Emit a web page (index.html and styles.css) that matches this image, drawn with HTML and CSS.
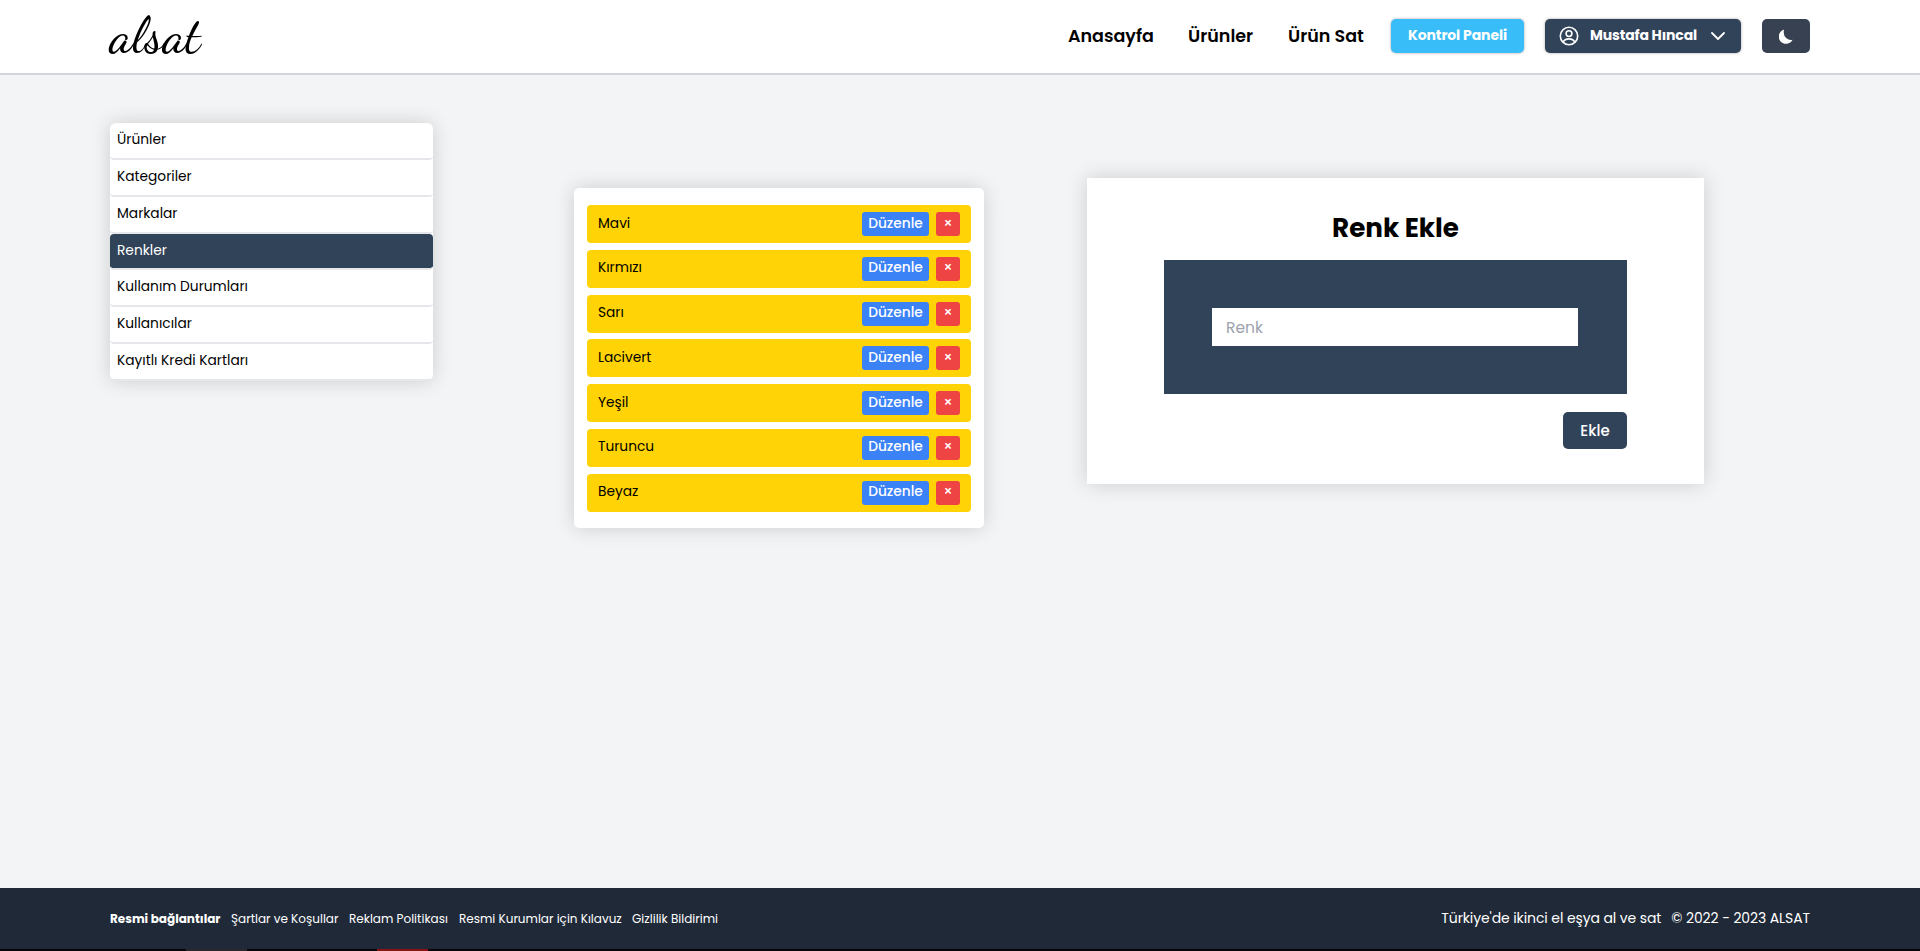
FILE: index.html
```html
<!DOCTYPE html>
<html lang="tr">
<head>
<meta charset="utf-8">
<title>alsat</title>
<link rel="stylesheet" href="styles.css">
</head>
<body>
<header class="header">
  <a class="logo">alsat</a>
  <nav class="nav">
    <a class="link home"><span>Anasayfa</span></a>
    <a class="link products"><span>Ürünler</span></a>
    <a class="link sell"><span>Ürün Sat</span></a>
    <a class="btn panel"><span>Kontrol Paneli</span></a>
    <button class="btn user">
      <svg class="avatar" viewBox="0 0 20 20" fill="none" stroke="#fff" stroke-width="1.6"><circle cx="10" cy="10" r="8.7"/><circle cx="10" cy="7.6" r="2.9"/><path d="M4.2 16.2C5.2 13.7 7.3 12.9 10 12.9s4.800.8 5.8 3.3"/></svg>
      <span>Mustafa Hıncal</span>
      <svg class="chevron" viewBox="0 0 14 9" fill="none" stroke="#fff" stroke-width="1.8" stroke-linecap="round" stroke-linejoin="round"><path d="M1 1l6 6 6-6"/></svg>
    </button>
    <button class="btn theme">
      <svg class="moon" viewBox="0 0 14 15" fill="#fff"><path d="M5.200.5A9 9 0 0 0 4.700 3.600a7.400 7.400 0 0 0 8.900 7.200A7.300 7.300 0 1 1 5.200.5z"/></svg>
    </button>
  </nav>
</header>
<main class="main">
  <ul class="side">
    <li><span>Ürünler</span></li>
    <li><span>Kategoriler</span></li>
    <li><span>Markalar</span></li>
    <li class="active"><span>Renkler</span></li>
    <li><span>Kullanım Durumları</span></li>
    <li><span>Kullanıcılar</span></li>
    <li><span>Kayıtlı Kredi Kartları</span></li>
  </ul>
  <section class="colors">
    <div class="row"><span class="name">Mavi</span><button class="edit">Düzenle</button><button class="del">×</button></div>
    <div class="row"><span class="name">Kırmızı</span><button class="edit">Düzenle</button><button class="del">×</button></div>
    <div class="row"><span class="name">Sarı</span><button class="edit">Düzenle</button><button class="del">×</button></div>
    <div class="row"><span class="name">Lacivert</span><button class="edit">Düzenle</button><button class="del">×</button></div>
    <div class="row"><span class="name">Yeşil</span><button class="edit">Düzenle</button><button class="del">×</button></div>
    <div class="row"><span class="name">Turuncu</span><button class="edit">Düzenle</button><button class="del">×</button></div>
    <div class="row"><span class="name">Beyaz</span><button class="edit">Düzenle</button><button class="del">×</button></div>
  </section>
  <form class="form">
    <h1>Renk Ekle</h1>
    <div class="field"><input type="text" placeholder="Renk"></div>
    <button type="button" class="add">Ekle</button>
  </form>
</main>
<footer class="footer">
  <div class="links">
    <b>Resmi bağlantılar</b>
    <a class="terms">Şartlar ve Koşullar</a>
    <a class="ads">Reklam Politikası</a>
    <a class="guide">Resmi Kurumlar için Kılavuz</a>
    <a class="privacy">Gizlilik Bildirimi</a>
  </div>
  <div class="copy"><span class="slogan">Türkiye'de ikinci el eşya al ve sat</span><span>© 2022 - 2023 ALSAT</span></div>
</footer>
<div class="strip"><i class="gray"></i><i class="red"></i></div>
</body>
</html>
```

FILE: styles.css
```css
* { box-sizing: border-box; margin: 0; padding: 0; }
body {
  height: 951px;
  display: flex;
  flex-direction: column;
  overflow: hidden;
  background: #f3f4f6;
  font-family: Poppins, Inter, sans-serif;
  color: #000;
}
button, input { font: inherit; border: 0; }
span, a, b, button, h1 { white-space: nowrap; }

.header {
  height: 75px;
  padding: 0 110px;
  display: flex;
  justify-content: space-between;
  background: #fff;
  border-bottom: 2px solid #d1d5db;
}
.logo { font: 500 51px/72px "Dancing Script", "Liberation Serif", cursive; letter-spacing: .3px; }
.nav { display: flex; align-items: flex-start; padding-top: 19px; }
.link { font-size: 17.5px; font-weight: 600; line-height: 34px; }
.home { width: 120px; }
.products { width: 100px; }
.sell { width: 103px; }
.btn {
  height: 34px;
  border-radius: 5px;
  color: #fff;
  font-size: 14px;
  font-weight: 700;
  display: flex;
  align-items: center;
  box-shadow: 0 0 3px rgba(0, 0, 0, .35);
}
.btn span { padding-bottom: 1px; }
.panel { width: 133px; justify-content: center; background: #38bdf8; margin-right: 21px; letter-spacing: -.1px; }
.user { width: 196px; padding-left: 14px; background: #314359; margin-right: 21px; }
.avatar { width: 20px; height: 20px; margin-right: 11px; }
.user span { width: 107px; margin-right: 14px; text-align: left; letter-spacing: -.15px; }
.chevron { width: 14px; height: 9px; }
.theme { width: 48px; justify-content: center; background: #374151; box-shadow: none; }
.moon { width: 14px; height: 15px; }

.main { flex: 1; display: flex; align-items: flex-start; padding-left: 110px; }
.side, .colors, .form { background: #fff; box-shadow: 0 0 20px rgba(0, 0, 0, .16); }
.side {
  list-style: none;
  width: 323px;
  margin-top: 48px;
  border-radius: 6px;
  font-size: 13.75px;
}
.side li {
  height: 36.86px;
  padding-left: 7px;
  line-height: 33px;
  border-bottom: 2px solid #e5e7eb;
  border-radius: 4px;
}
.side .active { background: linear-gradient(#314359, #314359) padding-box; color: #fff; }

.colors {
  width: 410px;
  height: 340px;
  margin: 113px 103px 0 141px;
  padding: 17px 13px;
  border-radius: 5px;
  display: flex;
  flex-direction: column;
  gap: 6.75px;
}
.row {
  height: 38px;
  flex: none;
  padding: 0 11px;
  display: flex;
  align-items: center;
  gap: 7px;
  border-radius: 4px;
  background: #ffd305;
  font-size: 13.75px;
}
.name { flex: 1; line-height: 20px; padding-bottom: 1px; }
.edit, .del { height: 24px; border-radius: 3px; color: #fff; font-weight: 500; padding-bottom: 1px; }
.edit { width: 67px; background: #3b82f6; }
.del { width: 24px; background: #ef4444; }

.form {
  width: 617px;
  height: 306px;
  margin-top: 103px;
  padding: 31px 77px 0;
  display: flex;
  flex-direction: column;
}
.form h1 { font-size: 26.2px; line-height: 37px; font-weight: 700; text-align: center; margin-bottom: 14px; }
.field { height: 134px; padding: 48px 49px 48px 48px; background: #314359; }
.field input { display: block; width: 100%; height: 38px; padding: 0 14px; font-size: 15.5px; background: #fff; }
.field input::placeholder { color: #9ca3af; opacity: 1; }
.add {
  align-self: flex-end;
  width: 64px;
  height: 37px;
  margin-top: 18px;
  border-radius: 5px;
  color: #fff;
  background: #314359;
  font-size: 15px;
  font-weight: 500;
  padding-bottom: 1px;
}

.footer {
  height: 61px;
  padding: 0 110px;
  display: flex;
  justify-content: space-between;
  line-height: 61px;
  background: #1f2937;
  color: #fff;
}
.links { display: flex; font-size: 12px; }
.links b { width: 121px; }
.terms { width: 118px; }
.ads { width: 110px; }
.guide { width: 173px; }
.copy { display: flex; gap: 10px; font-size: 14px; letter-spacing: -.1px; }
.strip { height: 2px; display: flex; background: #080506; }
.strip i { height: 2px; }
.gray { width: 61px; margin-left: 186px; background: #2c292b; }
.red { width: 51px; margin-left: 130px; background: #8c1218; }
```
